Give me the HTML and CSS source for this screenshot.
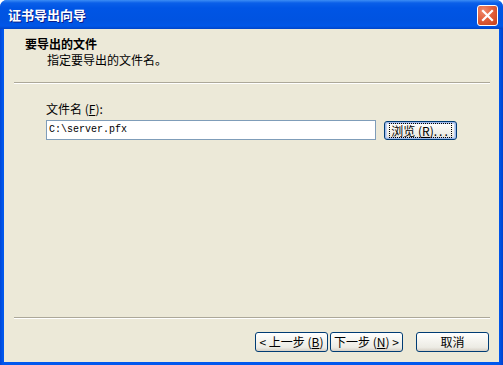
FILE: index.html
```html
<!DOCTYPE html>
<html lang="zh-CN">
<head>
<meta charset="utf-8">
<title>证书导出向导</title>
<link rel="stylesheet" href="styles.css">
</head>
<body>
<div class="window">
  <div class="titlebar">
    <span class="title">证书导出向导</span>
    <span class="close" aria-label="关闭">
      <svg width="13" height="13" viewBox="0 0 13 13"><path d="M2 2 L11 11 M11 2 L2 11" stroke="#fff" stroke-width="2.2" stroke-linecap="square"/></svg>
    </span>
  </div>
  <div class="client">
    <div class="header">
      <div class="h-title">要导出的文件</div>
      <div class="h-sub">指定要导出的文件名。</div>
    </div>
    <div class="sep"></div>
    <div class="content">
      <div class="label">文件名 (<u>F</u>):</div>
      <div class="row">
        <div class="input">C:\server.pfx</div>
        <button class="btn focused"><span class="focus">浏览 (<u>R</u>)<span class="dots">...</span></span></button>
      </div>
    </div>
    <div class="sep bottom-sep"></div>
    <div class="footer">
      <button class="btn">&lt; 上一步 (<u>B</u>)</button>
      <button class="btn">下一步 (<u>N</u>) &gt;</button>
      <button class="btn cancel">取消</button>
    </div>
  </div>
</div>
</body>
</html>
```
FILE: styles.css
```css
html, body {
  margin: 0;
  padding: 0;
  background: #fff;
}
body {
  width: 503px;
  height: 365px;
  overflow: hidden;
  font-family: "Noto Sans CJK SC", "Liberation Sans", sans-serif;
  font-size: 12px;
  color: #000;
}
.window {
  width: 503px;
  height: 365px;
  box-sizing: border-box;
  display: flex;
  flex-direction: column;
  background: linear-gradient(to right, #0047D8 0, #0058EE 3px, #0058EE 499px, #0041CC 503px);
  border-radius: 7px 7px 0 0;
  padding: 0 4px 3px 4px;
}
.titlebar {
  height: 29px;
  margin: 0 -4px;
  padding: 0 5px 0 8px;
  display: flex;
  align-items: center;
  justify-content: space-between;
  border-radius: 7px 7px 0 0;
  background: linear-gradient(to bottom, #3C8DF5 0, #0A5FE8 3px, #0055E5 8px, #0053E1 20px, #0057E8 26px, #0044C8 29px);
}
.title {
  color: #fff;
  font-weight: bold;
  font-size: 13px;
  line-height: 16px;
  text-shadow: 1px 1px 0 #0A1E8C;
  margin-top: 1px;
}
.close {
  width: 19px;
  height: 19px;
  border: 1px solid #fff;
  border-radius: 3px;
  display: flex;
  align-items: center;
  justify-content: center;
  background: radial-gradient(circle at 30% 25%, #F08A6C 0, #E2603C 45%, #C4401A 100%);
  margin-top: 1px;
}
.client {
  flex: 1;
  background: #ECE9D8;
  display: flex;
  flex-direction: column;
}
.header {
  padding: 7px 0 14px 21px;
  line-height: 16px;
}
.h-title {
  font-weight: bold;
}
.h-sub {
  padding-left: 22px;
}
.sep {
  margin: 0 9px 0 10px;
  height: 1px;
  border-top: 1px solid #ACA899;
  background: #fff;
}
.content {
  padding: 17px 0 0 42px;
}
.label {
  line-height: 16px;
}
u {
  text-decoration: underline;
  text-underline-offset: 1px;
}
.row {
  margin-top: 3px;
  display: flex;
  align-items: center;
  gap: 8px;
}
.input {
  width: 330px;
  height: 20px;
  box-sizing: border-box;
  border: 1px solid #7F9DB9;
  background: #fff;
  font-family: "Liberation Mono", monospace;
  font-size: 10px;
  line-height: 18px;
  padding-left: 2px;
}
.btn {
  width: 73px;
  height: 20px;
  box-sizing: border-box;
  border: 1px solid #003C74;
  border-radius: 3px;
  background: linear-gradient(to bottom, #FFFFFF 0, #F6F5F0 40%, #ECEBE4 80%, #D6D0C5 100%);
  font-family: "Noto Sans CJK SC", sans-serif;
  font-size: 12px;
  line-height: 16px;
  padding: 0;
  color: #000;
  display: flex;
  align-items: center;
  justify-content: center;
  white-space: nowrap;
}
.btn.focused {
  height: 19px;
  box-shadow: inset 0 0 0 1px #9DB9EB, inset 0 0 0 2px #C2D2F2;
}
.focus {
  outline: 1px dotted #000;
  outline-offset: 0;
  padding: 0 1px;
  line-height: 13px;
  display: block;
}
.dots {
  letter-spacing: 2px;
}
.bottom-sep {
  margin-top: auto;
}
.footer {
  display: flex;
  justify-content: flex-end;
  align-items: center;
  padding: 13px 10px 10px 0;
  gap: 2px;
}
.footer .cancel {
  margin-left: 11px;
}
```
